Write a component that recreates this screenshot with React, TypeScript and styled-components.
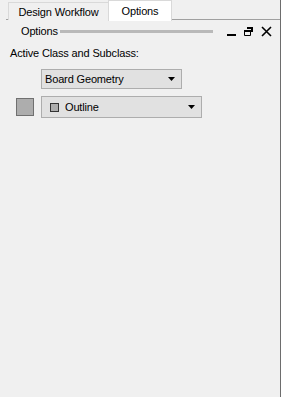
import React from "react";
import styled, { createGlobalStyle } from "styled-components";

const GlobalStyle = createGlobalStyle`
  html, body {
    margin: 0;
    padding: 0;
    background: #f0f0f0;
  }
  body {
    font-family: "Liberation Sans", Arial, sans-serif;
    font-size: 11px;
    letter-spacing: -0.15px;
    color: #000;
  }
`;

const Frame = styled.div`
  width: 281px;
  height: 397px;
  box-sizing: border-box;
  border-right: 1px solid #6d6d6d;
  background: #f0f0f0;
  display: flex;
  flex-direction: column;
`;

const TabBar = styled.div`
  display: flex;
  align-items: flex-end;
  height: 20px;
  margin-left: 6px;
  padding-left: 2px;
  box-shadow: inset 0 -1px 0 #a0a0a0;
`;

const Tab = styled.div<{ $active?: boolean }>`
  box-sizing: border-box;
  height: ${(p) => (p.$active ? "21px" : "18px")};
  width: ${(p) => (p.$active ? "64px" : "101px")};
  justify-content: center;
  display: flex;
  align-items: center;
  border: 1px solid #d9d9d9;
  border-bottom: none;
  background: ${(p) => (p.$active ? "#ffffff" : "#f0f0f0")};
  margin-bottom: ${(p) => (p.$active ? "-1px" : "0")};
  & + & {
    margin-left: -1px;
  }
`;

const Header = styled.div`
  display: flex;
  align-items: center;
  height: 22px;
  padding: 0 8px 0 21px;
  gap: 2px;
`;

const Grip = styled.div`
  flex: 1;
  height: 3px;
  background: #b9b9b9;
  margin-right: 12px;
`;

const Tools = styled.div`
  display: flex;
  align-items: center;
  gap: 8px;
`;

const Body = styled.div`
  padding: 3px 10px;
  display: flex;
  flex-direction: column;
`;

const Label = styled.div`
  height: 16px;
  line-height: 16px;
`;

const Row = styled.div<{ $top: number }>`
  display: flex;
  align-items: center;
  margin-top: ${(p) => p.$top}px;
`;

const Swatch = styled.div`
  width: 18px;
  height: 18px;
  box-sizing: border-box;
  border: 1px solid #707070;
  background: #adadad;
  margin-left: 6px;
  margin-right: 7px;
`;

const Select = styled.div<{ $width: number; $height: number; $indent?: number }>`
  box-sizing: border-box;
  width: ${(p) => p.$width}px;
  height: ${(p) => p.$height}px;
  margin-left: ${(p) => p.$indent ?? 0}px;
  border: 1px solid #adadad;
  background: #e1e1e1;
  display: flex;
  align-items: center;
  padding: 0 6px 0 3px;
  gap: 6px;
`;

const Value = styled.span`
  flex: 1;
`;

const Mini = styled.span`
  width: 9px;
  height: 9px;
  box-sizing: border-box;
  border: 1px solid #333;
  background: #adadad;
  margin-left: 5px;
`;

const Caret = () => (
  <svg width="7" height="4" viewBox="0 0 7 4">
    <path d="M0 0H7L3.5 4Z" fill="#000" />
  </svg>
);

export default function App() {
  return (
    <>
      <GlobalStyle />
      <Frame>
        <TabBar>
          <Tab>Design Workflow</Tab>
          <Tab $active>Options</Tab>
        </TabBar>
        <Header>
          <span>Options</span>
          <Grip />
          <Tools>
            <svg width="9" height="9" viewBox="0 0 9 9">
              <rect x="0" y="7" width="9" height="2" fill="#000" />
            </svg>
            <svg width="9" height="9" viewBox="0 0 9 9">
              <path d="M3 0H9V5H7V2H3Z" fill="#000" />
              <path d="M0.5 3.5H6.5V8.5H0.5Z" fill="none" stroke="#000" />
              <rect x="0" y="3" width="7" height="2" fill="#000" />
            </svg>
            <svg width="11" height="11" viewBox="0 0 11 11">
              <path d="M1 1L10 10M10 1L1 10" stroke="#000" strokeWidth="1.6" />
            </svg>
          </Tools>
        </Header>
        <Body>
          <Label>Active Class and Subclass:</Label>
          <Row $top={8}>
            <Select $width={141} $height={20} $indent={31}>
              <Value>Board Geometry</Value>
              <Caret />
            </Select>
          </Row>
          <Row $top={7}>
            <Swatch />
            <Select $width={161} $height={22}>
              <Mini />
              <Value>Outline</Value>
              <Caret />
            </Select>
          </Row>
        </Body>
      </Frame>
    </>
  );
}
